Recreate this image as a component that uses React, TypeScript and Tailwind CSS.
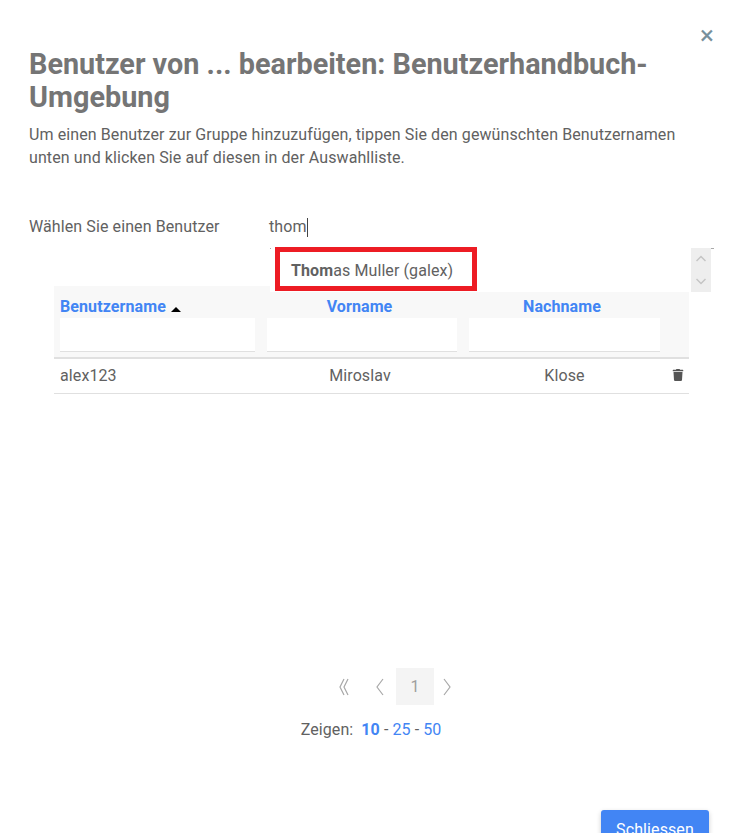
import { FaTrash } from "react-icons/fa";

const columns = [
  { label: "Benutzername", align: "text-left" },
  { label: "Vorname", align: "text-center" },
  { label: "Nachname", align: "text-center" },
];

const Chevron = ({ d, w = 10 }: { d: string; w?: number }) => (
  <svg width={w} height="18" viewBox={`0 0 ${w} 18`} fill="none" stroke="#a8a8a8" strokeWidth="1.2">
    <path d={d} />
  </svg>
);

const App = () => {
  return (
    <div className="relative h-[833px] w-[745px] overflow-hidden bg-white font-['Roboto',sans-serif] text-[#757575]">
      <button className="absolute right-[31px] top-[23px] text-[26px] leading-6 text-[#78909c]">×</button>

      <div className="px-[29px] pt-[48px]">
        <h2 className="text-[28.8px] font-bold leading-[33px] text-[#757575]">
          Benutzer von ... bearbeiten: Benutzerhandbuch-
          <br />
          Umgebung
        </h2>
        <p className="mt-[9px] text-[16px] leading-[23px] tracking-[0.1px] text-[#616161]">
          Um einen Benutzer zur Gruppe hinzuzufügen, tippen Sie den gewünschten Benutzernamen
          <br />
          unten und klicken Sie auf diesen in der Auswahlliste.
        </p>

        <div className="mt-[46px] flex h-[24px] items-center text-[16px] tracking-[0.1px] text-[#616161]">
          <span className="w-[240px]">Wählen Sie einen Benutzer</span>
          <span>thom</span>
          <span className="h-[19px] w-px bg-[#444]"></span>
        </div>
      </div>

      {/* autocomplete dropdown */}
      <div className="absolute left-[270px] top-[248px] z-10 h-[44px] w-[444px] bg-white">
        <span className="absolute left-0 top-0 h-px w-px bg-[#aaa]"></span>
        <span className="absolute left-[441px] top-0 h-px w-[3px] bg-[#aaa]"></span>
        <div className="absolute left-[5px] top-[-1px] flex h-[44px] w-[202px] items-center border-[5px] border-[#ed1c24] pl-[11px] pt-[4px] text-[16px] tracking-[0.1px] text-[#616161]">
          <span>
            <b>Thom</b>as Muller (galex)
          </span>
        </div>
        <div className="absolute left-[421px] top-0 flex h-[44px] w-[20px] flex-col items-center justify-between bg-[#eeeeee] pb-[7px] pt-[7px]">
          <svg width="10" height="7" viewBox="0 0 10 7" fill="none" stroke="#c4c4c4" strokeWidth="1.5">
            <path d="M0.5 6 5 1.5 9.5 6" />
          </svg>
          <svg width="10" height="7" viewBox="0 0 10 7" fill="none" stroke="#c4c4c4" strokeWidth="1.5">
            <path d="M0.5 1 5 5.5 9.5 1" />
          </svg>
        </div>
      </div>

      <div className="ml-[54px] mt-[47px] w-[635px]">
        <div className="h-[73px] border-b-2 border-[#e0e0e0] bg-[#f8f8f8]">
          <div className="grid grid-cols-[207px_202px_203px_23px] pt-[9px]">
            {columns.map((col) => (
              <div key={col.label} className="px-[6px]">
                <div className={`flex h-[23px] items-center text-[16px] font-bold tracking-[0.1px] text-[#4285f4] ${col.align === "text-center" ? "justify-center pr-[5px]" : ""}`}>
                  {col.label}
                  {col.label === "Benutzername" && (
                    <span className="ml-[5px] mt-[5px] h-0 w-0 border-x-[5px] border-b-[5px] border-x-transparent border-b-black"></span>
                  )}
                </div>
                <div className="h-[34px] border-b border-[#e0e0e0] bg-white"></div>
              </div>
            ))}
          </div>
        </div>
        <div className="grid h-[35px] grid-cols-[207px_202px_203px_23px] items-center border-b border-[#e0e0e0] text-[16px] tracking-[0.1px] text-[#616161]">
          <div className="px-[6px]">alex123</div>
          <div className="pl-[6px] pr-[10px] text-center">Miroslav</div>
          <div className="px-[6px] text-center">Klose</div>
          <div className="flex justify-center pb-[2px]">
            <FaTrash className="text-[12px] text-[#555]" />
          </div>
        </div>

        <div className="mt-[274px] flex h-[37px] items-center justify-center pl-[42px]">
          <span className="flex w-[38px] justify-center">
            <Chevron w={10} d="M5 1 1 9l4 8M9 1 5 9l4 8" />
          </span>
          <span className="flex w-[33px] justify-center">
            <Chevron w={8} d="M7 1 1 9l6 8" />
          </span>
          <span className="flex h-[37px] w-[38px] items-center justify-center bg-[#f4f4f4] text-[16px] text-[#9e9e9e]">1</span>
          <span className="flex w-[26px] justify-center">
            <Chevron w={8} d="M1 1l6 8-6 8" />
          </span>
        </div>

        <div className="mt-[13px] flex h-[24px] items-center justify-center pr-[1px] text-[16px] tracking-[0.1px] text-[#616161]">
          <span className="mr-[8px]">Zeigen:</span>
          <b className="text-[#4285f4]">10</b>
          <span className="mx-[4px]">-</span>
          <span className="text-[#4285f4]">25</span>
          <span className="mx-[4px]">-</span>
          <span className="text-[#4285f4]">50</span>
        </div>
      </div>

      <div className="absolute left-[601px] top-[810px]">
        <button className="h-[40px] w-[108px] rounded-[3px] bg-[#4285f4] text-[16px] tracking-[0.1px] text-white shadow-[0_2px_5px_rgba(0,0,0,0.2)]">
          Schliessen
        </button>
      </div>
    </div>
  );
};

export default App;
